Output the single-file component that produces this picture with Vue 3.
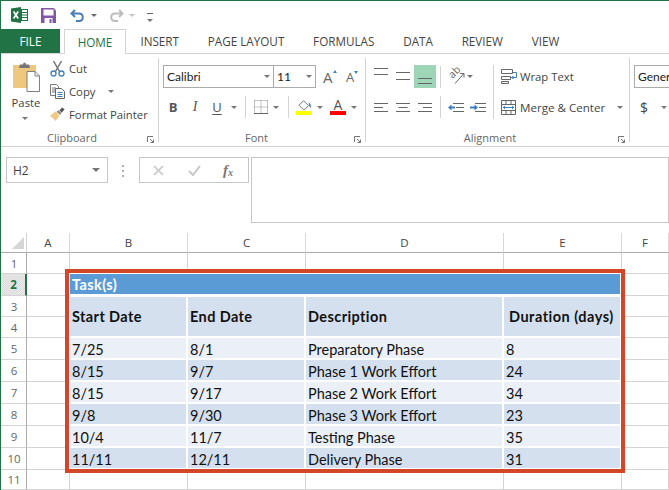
<script setup>
const tabs = ['INSERT', 'PAGE LAYOUT', 'FORMULAS', 'DATA', 'REVIEW', 'VIEW']
const columns = [
  { name: 'A', width: 43 },
  { name: 'B', width: 118 },
  { name: 'C', width: 118 },
  { name: 'D', width: 198 },
  { name: 'E', width: 118 },
  { name: 'F', width: 47 }
]
const rowHeights = [21, 22, 21, 21, 22, 22, 22, 22, 22, 22, 20]
const sheetColumns = '26px ' + columns.map((c) => c.width + 'px').join(' ')
const sheetRows = '20px ' + rowHeights.map((h) => h + 'px').join(' ')

const tasks = [
  ['7/25', '8/1', 'Preparatory Phase', '8'],
  ['8/15', '9/7', 'Phase 1 Work Effort', '24'],
  ['8/15', '9/17', 'Phase 2 Work Effort', '34'],
  ['9/8', '9/30', 'Phase 3 Work Effort', '23'],
  ['10/4', '11/7', 'Testing Phase', '35'],
  ['11/11', '12/11', 'Delivery Phase', '31']
]
const headings = ['Start Date', 'End Date', 'Description', 'Duration (days)']
</script>

<template>
  <div class="excel">
    <div class="qat">
      <svg class="logo" width="17" height="16" viewBox="0 0 17 16">
        <rect x="6.5" y="2.5" width="10" height="11" fill="#fff" stroke="#217346" />
        <path d="M10.5 3v10M7 5.5h9M7 8h9M7 10.500h9" stroke="#217346" fill="none" />
        <path d="M0 1.600L10 0v16L0 14.400z" fill="#217346" />
        <path d="M2.600 4.600l4.600 6.800M7.200 4.600l-4.600 6.800" stroke="#fff" stroke-width="1.700" fill="none" />
      </svg>
      <svg class="save" width="15" height="15" viewBox="0 0 15 15">
        <path d="M0 0h12.500l2.500 2.500V15H0z" fill="#8257a8" />
        <rect x="2.500" y="1.500" width="10" height="6" fill="#fff" />
        <rect x="3.500" y="10" width="8" height="5" fill="#fff" />
        <rect x="8.500" y="11" width="2" height="4" fill="#8257a8" />
      </svg>
      <svg class="undo" width="15" height="13" viewBox="0 0 15 13">
        <path d="M5 1L1.500 4.500 5 8M2 4.500h7c5 0 5 7.500 0 7.500H6" stroke="#4a7fb5" stroke-width="2" fill="none" />
      </svg>
      <i class="caret qat-caret"></i>
      <svg class="redo" width="15" height="13" viewBox="0 0 15 13">
        <path d="M10 1l3.500 3.500L10 8M13 4.500H6c-5 0-5 7.500 0 7.500h3" stroke="#bdbdbd" stroke-width="2" fill="none" />
      </svg>
      <i class="caret qat-caret faded"></i>
      <span class="customize"><i class="caret"></i></span>
    </div>

    <div class="tabs">
      <div class="file">FILE</div>
      <div class="tab active">HOME</div>
      <div v-for="tab in tabs" :key="tab" class="tab">{{ tab }}</div>
    </div>

    <div class="ribbon">
      <section class="group clipboard">
        <div class="body clip-body">
          <div class="paste">
            <svg width="28" height="30" viewBox="0 0 28 30">
              <path d="M1 3h23v23H1z" fill="#edc87e" />
              <path d="M8 2.500h3C11 0 14 0 14 2.500h3l1 3.500H7z" fill="#767676" />
              <path d="M15 9.500h8l4.500 4.500v15.500H15z" fill="#fff" stroke="#808080" />
              <path d="M23 9.500V14h4.500" fill="none" stroke="#808080" />
            </svg>
            <span class="paste-label">Paste</span>
            <i class="caret"></i>
          </div>
          <div class="clip-list">
            <div class="clip-row">
              <svg width="15" height="16" viewBox="0 0 15 16">
                <path d="M3.500 0l6 10.500M11.500 0l-6 10.500" stroke="#777" stroke-width="1.500" fill="none" />
                <circle cx="3.500" cy="12.500" r="2.500" fill="#fff" stroke="#3f7fc1" stroke-width="1.300" />
                <circle cx="11.500" cy="12.500" r="2.500" fill="#fff" stroke="#3f7fc1" stroke-width="1.300" />
              </svg>
              <span>Cut</span>
            </div>
            <div class="clip-row">
              <svg width="15" height="15" viewBox="0 0 15 15">
                <path d="M.5.500h6l2 2v9h-8z" fill="#fff" stroke="#777" />
                <path d="M2 4h4M2 6h4M2 8h4" stroke="#777" />
                <path d="M5.500 4.500h6l3 3v7h-9z" fill="#fff" stroke="#666" />
                <path d="M7.500 8.500h5M7.500 10.500h5M7.500 12.500h5" stroke="#3f7fc1" />
              </svg>
              <span>Copy</span>
              <i class="caret copy-caret"></i>
            </div>
            <div class="clip-row">
              <svg width="16" height="15" viewBox="0 0 16 15">
                <path d="M0 9l6-5 4 4.500-4 6L4 12l-1 1 .5-2.500L2 11z" fill="#edc87e" />
                <path d="M7 4.500l4 3.500 1-2-3-3z" fill="#888" />
                <path d="M10 3l3-3 2.500 2-3 3.500z" fill="#555" />
              </svg>
              <span>Format Painter</span>
            </div>
          </div>
        </div>
        <div class="label">
          <span>Clipboard</span>
          <svg class="launcher" width="7" height="7" viewBox="0 0 7 7">
            <path d="M.5 6V.5H6M3 3l3.500 3.500M6.500 3.500v3h-3" stroke="#777" fill="none" />
          </svg>
        </div>
      </section>

      <section class="group font">
        <div class="body">
          <div class="font-top">
            <div class="combo font-name">Calibri<i class="caret"></i></div>
            <div class="combo font-size">11<i class="caret"></i></div>
            <span class="grow">A<i class="mini-up"></i></span>
            <span class="shrink">A<i class="mini-down"></i></span>
          </div>
          <div class="font-tools">
            <b class="tool">B</b>
            <em class="tool italic">I</em>
            <u class="tool under">U</u>
            <span class="caret-box w12"><i class="caret"></i></span>
            <i class="sep sep-a"></i>
            <svg class="border-icon" width="14" height="14" viewBox="0 0 14 14">
              <path d="M.5.500h13M.5.500v13M13.500.5v13M7 .5v13M.5 7h13" fill="none" stroke="#888" stroke-dasharray="1 1" />
              <path d="M0 13.500h14" stroke="#666" />
            </svg>
            <span class="caret-box w16"><i class="caret"></i></span>
            <i class="sep sep-b"></i>
            <div class="fill-icon">
              <svg width="16" height="11" viewBox="0 0 16 11">
                <path d="M7.500 .7l5 5-4.500 4.500-5-5z" fill="#fff" stroke="#777" />
                <path d="M12.500 2.500c2 1 3 3 2.500 5.500l-2-2.500z" fill="#3f7fc1" />
              </svg>
              <i class="yellow"></i>
            </div>
            <span class="caret-box w16"><i class="caret"></i></span>
            <div class="color-a">
              <span>A</span>
              <i class="red"></i>
            </div>
            <span class="caret-box w16"><i class="caret"></i></span>
          </div>
        </div>
        <div class="label">
          <span>Font</span>
          <svg class="launcher" width="7" height="7" viewBox="0 0 7 7">
            <path d="M.5 6V.5H6M3 3l3.500 3.500M6.500 3.500v3h-3" stroke="#777" fill="none" />
          </svg>
        </div>
      </section>

      <section class="group alignment">
        <div class="body align-body">
          <div class="align-left">
            <div class="align-row">
              <span class="btn">
                <svg width="14" height="23" viewBox="0 0 14 23"><path d="M0 3.500h14M0 9.500h14" stroke="#666" /></svg>
              </span>
              <span class="btn">
                <svg width="14" height="23" viewBox="0 0 14 23"><path d="M0 7.500h14M0 14.500h14" stroke="#666" /></svg>
              </span>
              <span class="btn selected">
                <svg width="14" height="23" viewBox="0 0 14 23"><path d="M0 13.500h14M0 18.500h14" stroke="#666" /></svg>
              </span>
              <i class="sep sep-c"></i>
              <svg class="orient" width="18" height="17" viewBox="0 0 18 17">
                <path d="M8 15.500L16.500 6M13 5.500h4V9.500" stroke="#666" fill="none" />
                <text transform="translate(5.500 11) rotate(-45)" class="orient-text">ab</text>
              </svg>
              <span class="caret-box w10"><i class="caret"></i></span>
            </div>
            <div class="align-row second">
              <span class="btn">
                <svg width="14" height="11" viewBox="0 0 14 11"><path d="M0 1.500h14M0 5.500h9M0 9.500h14" stroke="#666" /></svg>
              </span>
              <span class="btn">
                <svg width="14" height="11" viewBox="0 0 14 11"><path d="M0 1.500h14M2.500 5.500h9M0 9.500h14" stroke="#666" /></svg>
              </span>
              <span class="btn">
                <svg width="14" height="11" viewBox="0 0 14 11"><path d="M0 1.500h14M5 5.500h9M0 9.500h14" stroke="#666" /></svg>
              </span>
              <i class="sep sep-c"></i>
              <span class="btn first">
                <svg width="16" height="11" viewBox="0 0 16 11">
                  <path d="M5 1.500h11M8 5.500h8M5 9.500h11" stroke="#666" />
                  <path d="M0 5.500l3.500-3v2H7v2H3.500v2z" fill="#3f7fc1" />
                </svg>
              </span>
              <span class="btn">
                <svg width="16" height="11" viewBox="0 0 16 11">
                  <path d="M5 1.500h11M9 5.500h7M5 9.500h11" stroke="#666" />
                  <path d="M8 5.500l-3.500-3v2H0v2h4.500v2z" fill="#3f7fc1" />
                </svg>
              </span>
            </div>
          </div>
          <i class="sep sep-d"></i>
          <div class="align-right">
            <div class="wide-row">
              <svg width="16" height="15" viewBox="0 0 16 15">
                <path d="M.5 .5h11v4H.5zM.5 7.500h9v3h-9zM.5 12.500h7v2h-7z" fill="none" stroke="#666" />
                <path d="M12 3.500h3.500v5H10" fill="none" stroke="#3f7fc1" />
                <path d="M10 8.500l2.500-2v4z" fill="#3f7fc1" />
              </svg>
              <span>Wrap Text</span>
            </div>
            <div class="wide-row merge">
              <svg width="16" height="15" viewBox="0 0 16 15">
                <path d="M.5.500h14v14H.5zM.5 4.500h14M.5 10.500h14M5 .5v4M10 .5v4M5 10.500v4M10 10.500v4" fill="none" stroke="#666" />
                <path d="M2 7.500h11" stroke="#3f7fc1" />
                <path d="M2 7.500l2-2v4zM13 7.500l-2-2v4z" fill="#3f7fc1" />
              </svg>
              <span>Merge &amp; Center</span>
              <i class="caret merge-caret"></i>
            </div>
          </div>
        </div>
        <div class="label">
          <span>Alignment</span>
          <svg class="launcher" width="7" height="7" viewBox="0 0 7 7">
            <path d="M.5 6V.5H6M3 3l3.500 3.500M6.500 3.500v3h-3" stroke="#777" fill="none" />
          </svg>
        </div>
      </section>

      <section class="number">
        <div class="combo number-box">General</div>
        <div class="number-tools">
          <span class="dollar">$</span>
          <i class="caret"></i>
        </div>
      </section>
    </div>

    <div class="formula">
      <div class="name-box">H2<i class="caret big"></i></div>
      <div class="dots"><i></i><i></i><i></i></div>
      <div class="fx-box">
        <svg width="11" height="11" viewBox="0 0 11 11">
          <path d="M1 1l9 9M10 1l-9 9" stroke="#c6c6c6" stroke-width="1.600" />
        </svg>
        <svg width="13" height="11" viewBox="0 0 13 11">
          <path d="M1 6l4 4 7-9" stroke="#c6c6c6" stroke-width="2" fill="none" />
        </svg>
        <span class="fx">f<sub>x</sub></span>
      </div>
      <div class="formula-input"></div>
    </div>

    <div class="sheet" :style="{ gridTemplateColumns: sheetColumns, gridTemplateRows: sheetRows }">
      <div class="corner"><i></i></div>
      <div v-for="col in columns" :key="col.name" class="col-head">{{ col.name }}</div>
      <template v-for="(h, r) in rowHeights" :key="r">
        <div class="row-head" :class="{ current: r === 1 }">{{ r + 1 }}</div>
        <div v-for="col in columns" :key="col.name" class="cell"></div>
      </template>

      <div class="task-box">
        <div class="task-title">Task(s)</div>
        <div v-for="h in headings" :key="h" class="task-head dark">{{ h }}</div>
        <template v-for="(task, i) in tasks" :key="i">
          <div v-for="(value, j) in task" :key="j" class="task-cell" :class="i % 2 ? 'dark' : 'light'">{{ value }}</div>
        </template>
      </div>
    </div>
  </div>
</template>

<style>
html,
body {
  margin: 0;
  background: #fff;
}
</style>

<style scoped>
.excel {
  box-sizing: border-box;
  width: 669px;
  height: 490px;
  overflow: hidden;
  background: #fff;
  border-top: 1px solid #217346;
  border-left: 1px solid #217346;
  font-family: "Open Sans", "Liberation Sans", sans-serif;
  font-size: 11px;
  color: #444;
}

i {
  display: block;
  font-style: normal;
}

.caret {
  width: 0;
  height: 0;
  border-left: 3px solid transparent;
  border-right: 3px solid transparent;
  border-top: 3px solid #777;
}

.caret.big {
  border-left-width: 4px;
  border-right-width: 4px;
  border-top-width: 4px;
}

.caret-box {
  display: flex;
  align-items: center;
  justify-content: center;
  height: 22px;
}

.w10 { width: 10px; }
.w12 { width: 12px; }
.w16 { width: 16px; }

/* quick access */
.qat {
  display: flex;
  align-items: center;
  height: 28px;
}

.logo { margin-left: 10px; }
.save { margin-left: 13px; }
.undo { margin-left: 14px; }
.redo { margin-left: 12px; }

.qat-caret {
  margin-left: 6px;
  border-top-color: #666;
}

.qat-caret.faded {
  margin-left: 5px;
  border-top-color: #c4c4c4;
}

.customize {
  margin-left: 12px;
  padding-top: 5px;
  border-top: 1px solid #666;
  margin-top: 4px;
}

/* tabs */
.tabs {
  display: flex;
  height: 25px;
  box-sizing: border-box;
  border-bottom: 1px solid #d4d4d4;
}

.file {
  width: 59px;
  height: 24px;
  line-height: 24px;
  text-align: center;
  background: #217346;
  color: #fff;
  font-size: 11.7px;
}

.tab {
  padding: 0 14.4px;
  height: 24px;
  line-height: 24px;
  font-size: 11.7px;
  color: #444;
}

.tab.active {
  box-sizing: border-box;
  width: 62px;
  height: 25px;
  padding: 0;
  margin-left: 4px;
  text-align: center;
  color: #217346;
  background: #fff;
  border: 1px solid #d4d4d4;
  border-bottom: none;
}

/* ribbon */
.ribbon {
  box-sizing: border-box;
  display: flex;
  height: 93px;
  padding-top: 4px;
  border-bottom: 1px solid #d4d4d4;
}

.group {
  box-sizing: border-box;
  height: 84px;
  border-right: 1px solid #d4d4d4;
}

.body { height: 72px; }

.label {
  display: flex;
  height: 12px;
  line-height: 16px;
  color: #666;
}

.label span {
  flex: 1;
  text-align: center;
}

.launcher {
  margin: 6px 4px 0 4px;
}

.clipboard { width: 158px; }
.font { width: 207px; }
.alignment { width: 264px; }

.clip-body { display: flex; }

.paste {
  display: flex;
  flex-direction: column;
  align-items: center;
  width: 49px;
  padding: 4px 0 0 1px;
  box-sizing: border-box;
  font-size: 11.3px;
}

.paste-label {
  margin-top: 3px;
  line-height: 16px;
}

.paste .caret {
  margin-top: 6px;
  margin-left: -3px;
}

.clip-list {
  margin-top: -1px;
  font-size: 11.3px;
}

.clip-row {
  display: flex;
  align-items: center;
  height: 23px;
  gap: 4px;
}

.clip-row svg { width: 15px; flex: none; }
.copy-caret { margin-left: 9px; }

/* font */
.font { padding-left: 4px; }

.font-top {
  display: flex;
  align-items: center;
  padding-top: 7px;
}

.combo {
  box-sizing: border-box;
  height: 23px;
  line-height: 21px;
  border: 1px solid #ababab;
  background: #fff;
  color: #222;
  font-family: Lato, "Liberation Sans", sans-serif;
  font-size: 12px;
  display: flex;
  align-items: center;
  justify-content: space-between;
  padding: 0 3px;
}

.font-name { width: 111px; }
.font-size { width: 43px; margin-left: -1px; }

.grow,
.shrink {
  display: flex;
  color: #666;
}

.grow { margin-left: 7px; width: 18px; font-size: 15px; }
.shrink { margin-left: 5px; font-size: 13px; }

.mini-up,
.mini-down {
  width: 0;
  height: 0;
  margin-top: 3px;
  border-left: 2.500px solid transparent;
  border-right: 2.500px solid transparent;
}

.mini-up { border-bottom: 3px solid #3f7fc1; }
.mini-down { border-top: 3px solid #3f7fc1; }

.font-tools {
  display: flex;
  align-items: center;
  margin: 8px 0 0 -1px;
  height: 22px;
}

.tool {
  width: 22px;
  text-align: center;
  font-size: 13px;
  color: #555;
  font-family: "Open Sans", sans-serif;
}

.italic { font-family: "Liberation Serif", serif; font-size: 14px; }
.under { text-decoration: underline; text-underline-offset: 2px; }

.sep {
  width: 1px;
  background: #d4d4d4;
}

.sep-a { height: 22px; margin-left: 5px; }
.border-icon { margin-left: 8px; }
.sep-b { height: 22px; margin-left: 4px; }

.fill-icon {
  width: 16px;
  margin-left: 7px;
}

.fill-icon svg { display: block; }
.yellow { height: 4px; background: #ffff00; }

.color-a {
  width: 16px;
  margin-left: 2px;
  text-align: center;
  font-size: 14px;
  line-height: 12px;
  color: #555;
}

.color-a span { display: block; }
.red { height: 4px; background: #ff0000; }

/* alignment */
.align-body {
  display: flex;
  align-items: flex-start;
  padding-left: 4px;
  padding-top: 7px;
  box-sizing: border-box;
}

.align-left { width: 123px; }

.align-row {
  display: flex;
  align-items: center;
  height: 23px;
}

.align-row.second {
  margin-top: 8px;
  height: 22px;
}

.btn {
  display: flex;
  align-items: center;
  justify-content: center;
  width: 22px;
  height: 23px;
}

.btn.selected { background: #9fd5b7; }
.sep-c { height: 22px; margin-left: 4px; }
.orient { margin-left: 6px; overflow: visible; }
.orient-text { font-size: 10.5px; fill: #666; font-family: "Open Sans", sans-serif; }
.first { margin-left: 4px; }
.sep-d { height: 54px; flex: none; }

.align-right {
  padding-left: 7px;
  font-size: 11.3px;
}

.wide-row {
  display: flex;
  align-items: center;
  gap: 3px;
  height: 23px;
  white-space: nowrap;
}

.wide-row.merge {
  margin-top: 8px;
  height: 22px;
  font-size: 11.6px;
}

.merge-caret { margin-left: 9px; }

/* number */
.number {
  flex: 1;
  min-width: 0;
  padding: 7px 0 0 4px;
  overflow: hidden;
}

.number-box {
  width: 60px;
  justify-content: flex-start;
}

.number-tools {
  display: flex;
  align-items: center;
  margin-top: 8px;
  height: 22px;
  padding-left: 6px;
}

.dollar { font-size: 14px; width: 21px; }

/* formula bar */
.formula {
  display: flex;
  align-items: flex-start;
  box-sizing: border-box;
  height: 86px;
  padding: 10px 0 0 5px;
}

.name-box {
  box-sizing: border-box;
  display: flex;
  align-items: center;
  justify-content: space-between;
  width: 102px;
  height: 26px;
  padding: 0 7px 0 6px;
  border: 1px solid #c6c6c6;
  font-size: 12px;
  color: #444;
}

.dots {
  display: flex;
  flex-direction: column;
  gap: 3px;
  width: 2px;
  padding-top: 8px;
  margin: 0 15px 0 14px;
}

.dots i {
  width: 2px;
  height: 2px;
  background: #b0b0b0;
}

.fx-box {
  box-sizing: border-box;
  display: flex;
  align-items: center;
  width: 110px;
  height: 26px;
  gap: 24px;
  padding-left: 13px;
  border: 1px solid #c6c6c6;
}

.fx {
  margin-left: -2px;
  font-family: "Liberation Serif", serif;
  font-style: italic;
  font-weight: bold;
  font-size: 15px;
  color: #777;
}

.fx sub {
  font-size: 10px;
  vertical-align: -1px;
}

.formula-input {
  box-sizing: border-box;
  flex: 1;
  height: 66px;
  margin-left: 2px;
  border: 1px solid #c6c6c6;
}

/* sheet */
.sheet {
  position: relative;
  display: grid;
  height: 256px;
}

.corner {
  box-sizing: border-box;
  border-right: 1px solid #d4d4d4;
  border-bottom: 1px solid #ababab;
}

.corner i {
  width: 0;
  height: 0;
  margin: 4px 0 0 11px;
  border-left: 12px solid transparent;
  border-bottom: 12px solid #d6d6d6;
}

.col-head {
  box-sizing: border-box;
  line-height: 19px;
  text-align: center;
  font-size: 11.5px;
  color: #444;
  border-right: 1px solid #d9d9d9;
  border-bottom: 1px solid #ababab;
}

.row-head {
  box-sizing: border-box;
  display: flex;
  align-items: center;
  justify-content: center;
  padding-left: 1px;
  font-size: 11.5px;
  color: #666;
  border-right: 1px solid #ababab;
  border-bottom: 1px solid #d4d4d4;
}

.row-head.current {
  font-weight: bold;
  color: #217346;
  background: repeating-conic-gradient(#dedede 0 25%, #e8e8e8 0 50%) 0 0 / 2px 2px;
  border-right: 2px solid #217346;
}

.cell {
  box-sizing: border-box;
  border-right: 1px solid #d4d4d4;
  border-bottom: 1px solid #d4d4d4;
}

.task-box {
  position: absolute;
  left: 64px;
  top: 36px;
  box-sizing: border-box;
  display: grid;
  grid-template-columns: 116px 116px 196px 116px;
  grid-template-rows: 20px 40px repeat(6, 20px);
  column-gap: 2px;
  row-gap: 2px;
  width: 560px;
  height: 204px;
  padding: 1px;
  background: #fff;
  border: 4px solid #d24726;
  font-family: Lato, "Liberation Sans", sans-serif;
  font-size: 14.5px;
  color: #111;
}

.task-title {
  grid-column: 1 / -1;
  padding-left: 2px;
  height: 20px;
  line-height: 22px;
  letter-spacing: 0.4px;
  font-weight: bold;
  color: #fff;
  background: #5b9bd5;
}

.task-head {
  margin-top: 1px;
  padding-left: 2px;
  line-height: 39px;
  letter-spacing: 0.4px;
  font-weight: bold;
  white-space: nowrap;
}

.task-head:nth-child(5) {
  padding-left: 5px;
  letter-spacing: 0.5px;
}

.task-cell {
  padding-left: 2px;
  line-height: 23px;
  height: 20px;
}

.dark {
  background: repeating-conic-gradient(#d2deee 0 25%, #d7e2f0 0 50%) 0 0 / 2px 2px;
}

.light {
  background: repeating-conic-gradient(#e8edf6 0 25%, #edf1f8 0 50%) 0 0 / 2px 2px;
}
</style>
